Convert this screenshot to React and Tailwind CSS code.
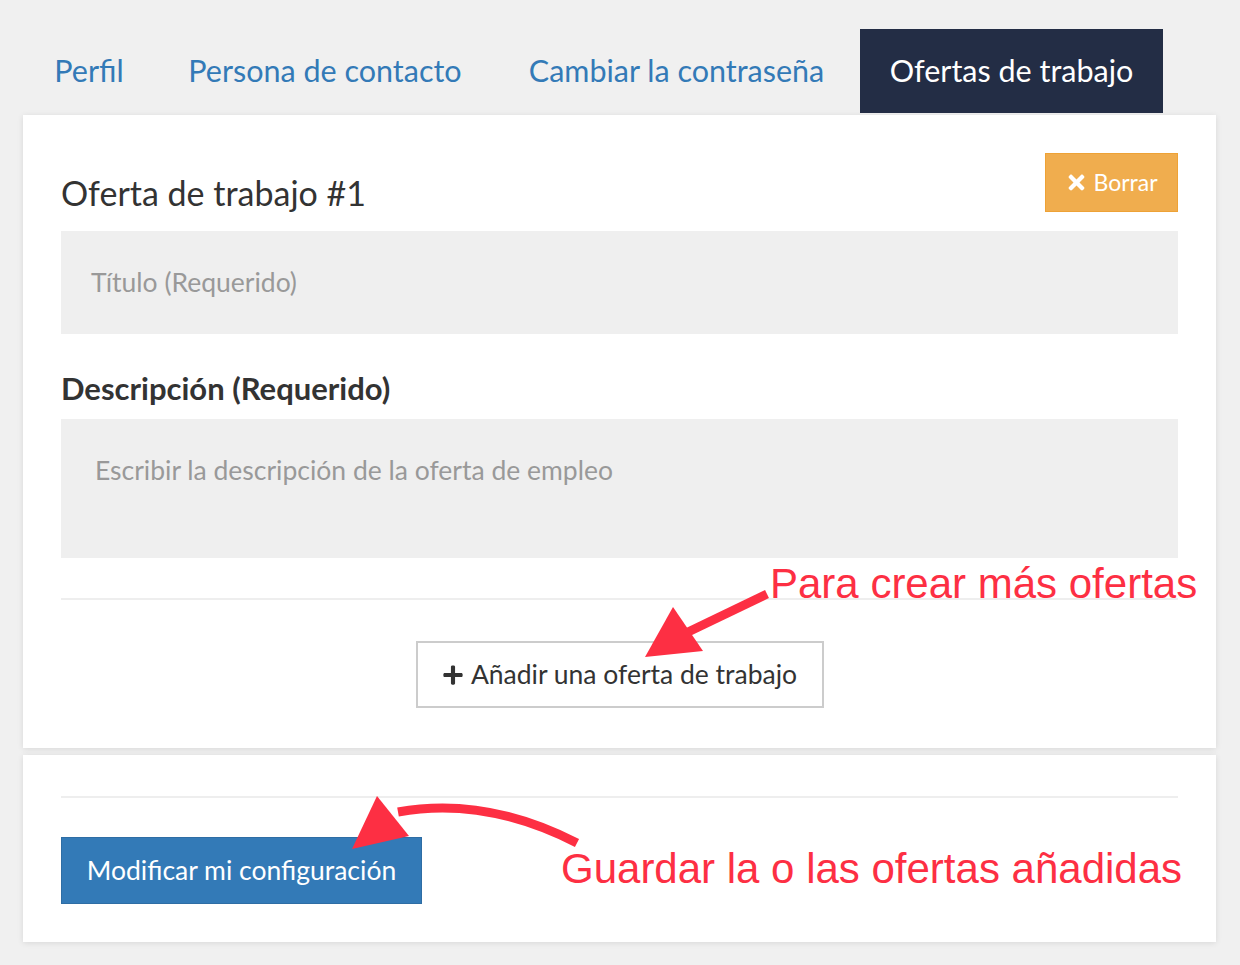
import React from "react";
import { FaTimes, FaPlus } from "react-icons/fa";

const tabs = [
  { label: "Perfil", w: "w-[132px]", active: false },
  { label: "Persona de contacto", w: "w-[336px]", active: false },
  { label: "Cambiar la contraseña", w: "w-[363px]", active: false },
  { label: "Ofertas de trabajo", w: "w-[303px]", active: true },
];

export default function App() {
  return (
    <div
      className="relative w-[1240px] h-[965px] overflow-hidden bg-[#f0f0f0]"
      style={{ fontFamily: "Lato, 'Open Sans', sans-serif" }}
    >
      <div className="pl-[23px] pt-[29px] w-[1216px]">
        {/* Tabs */}
        <div className="flex gap-[2px]">
          {tabs.map((t) => (
            <div
              key={t.label}
              className={
                t.active
                  ? `${t.w} h-[84px] flex items-center justify-center bg-[#232d45] text-white text-[30.5px]`
                  : `${t.w} h-[84px] flex items-center justify-center text-[#337ab7] text-[30.5px]`
              }
            >
              {t.label}
            </div>
          ))}
        </div>

        {/* Card 1 */}
        <div className="mt-[2px] bg-white shadow-[0_1px_6px_rgba(0,0,0,0.10)] px-[38px] pt-[38px] pb-[40px]">
          <div className="flex justify-between items-start h-[59px]">
            <h2 className="mt-[20px] text-[34px] leading-[40px] text-[#333]">
              Oferta de trabajo #1
            </h2>
            <button className="w-[133px] h-[59px] flex items-center justify-center gap-[5px] bg-[#f0ad4e] border border-[#eea236] text-white text-[23px]">
              <FaTimes className="w-[23px] h-[23px]" />
              Borrar
            </button>
          </div>

          <div className="mt-[19px] h-[103px] bg-[#efefef] flex items-center pl-[30px] text-[26.5px] text-[#999]">
            Título (Requerido)
          </div>

          <div className="mt-[36px] text-[31px] leading-[36px] font-bold text-[#333]">
            Descripción (Requerido)
          </div>

          <div className="mt-[13px] h-[139px] bg-[#efefef] pl-[34px] pt-[36px] text-[26.5px] leading-[30px] text-[#999]">
            Escribir la descripción de la oferta de empleo
          </div>

          <div className="mt-[40px] h-[2px] bg-[#eeeeee]" />

          <div className="mt-[41px] flex justify-center">
            <button className="w-[408px] h-[67px] flex items-center justify-center gap-[7px] bg-white border-2 border-[#cccccc] text-[#333] text-[26.5px]">
              <FaPlus className="w-[22px] h-[22px]" />
              Añadir una oferta de trabajo
            </button>
          </div>
        </div>

        {/* Card 2 */}
        <div className="mt-[7px] bg-white shadow-[0_1px_6px_rgba(0,0,0,0.10)] px-[38px] pt-[41px] pb-[38px]">
          <div className="h-[2px] bg-[#eeeeee]" />
          <button className="mt-[39px] w-[361px] h-[67px] flex items-center justify-center bg-[#337ab7] border border-[#2e6da4] text-white text-[26.5px]">
            Modificar mi configuración
          </button>
        </div>
      </div>

      {/* Annotations */}
      <svg
        className="absolute left-0 top-0 pointer-events-none"
        width="1240"
        height="965"
        viewBox="0 0 1240 965"
      >
        <line x1="767" y1="594" x2="686" y2="633" stroke="#fd2f43" strokeWidth="9" />
        <polygon points="645,657 673,607 703,651" fill="#fd2f43" />
        <path d="M 577 843 Q 485 796 398 812" stroke="#fd2f43" strokeWidth="9" fill="none" />
        <polygon points="352,849 377,796 409,836" fill="#fd2f43" />
      </svg>
      <div
        className="absolute left-[770px] top-[563px] text-[42px] leading-none text-[#fd2f43] whitespace-nowrap"
        style={{ fontFamily: "'Liberation Sans', Arial, sans-serif" }}
      >
        Para crear más ofertas
      </div>
      <div
        className="absolute left-[561px] top-[848px] text-[42px] leading-none text-[#fd2f43] whitespace-nowrap"
        style={{ fontFamily: "'Liberation Sans', Arial, sans-serif" }}
      >
        Guardar la o las ofertas añadidas
      </div>
    </div>
  );
}
